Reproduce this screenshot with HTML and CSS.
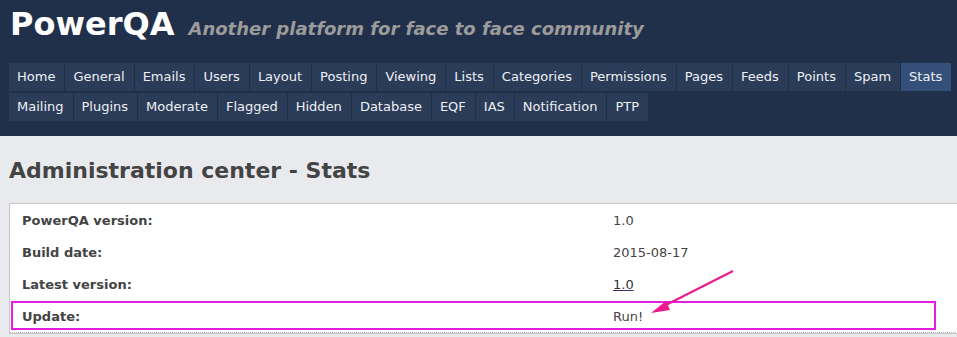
FILE: index.html
```html
<!DOCTYPE html>
<html lang="en">
<head>
    <meta charset="UTF-8">
    <title>Administration center - Stats</title>
    <link rel="stylesheet" href="styles.css">
</head>
<body>
    <!-- Cabeçalho -->
    <div class="header">
        <div class="logo-line">
            <span class="logo">PowerQA</span>
            <span class="tagline">Another platform for face to face community</span>
        </div>
        <ul class="nav">
            <li><a href="#">Home</a></li>
            <li><a href="#">General</a></li>
            <li><a href="#">Emails</a></li>
            <li><a href="#">Users</a></li>
            <li><a href="#">Layout</a></li>
            <li><a href="#">Posting</a></li>
            <li><a href="#">Viewing</a></li>
            <li><a href="#">Lists</a></li>
            <li><a href="#">Categories</a></li>
            <li><a href="#">Permissions</a></li>
            <li><a href="#">Pages</a></li>
            <li><a href="#">Feeds</a></li>
            <li><a href="#">Points</a></li>
            <li><a href="#">Spam</a></li>
            <li class="selected"><a href="#">Stats</a></li>
            <li class="break"></li>
            <li><a href="#">Mailing</a></li>
            <li><a href="#">Plugins</a></li>
            <li><a href="#">Moderate</a></li>
            <li><a href="#">Flagged</a></li>
            <li><a href="#">Hidden</a></li>
            <li><a href="#">Database</a></li>
            <li><a href="#">EQF</a></li>
            <li><a href="#">IAS</a></li>
            <li><a href="#">Notification</a></li>
            <li><a href="#">PTP</a></li>
        </ul>
    </div>

    <!-- Conteúdo -->
    <div class="main">
        <h1>Administration center - Stats</h1>

        <div class="panel">
            <table class="stats">
                <tr>
                    <td class="label">PowerQA version:</td>
                    <td>1.0</td>
                </tr>
                <tr>
                    <td class="label">Build date:</td>
                    <td>2015-08-17</td>
                </tr>
                <tr>
                    <td class="label">Latest version:</td>
                    <td><a href="#">1.0</a></td>
                </tr>
                <tr class="last">
                    <td class="label">Update:</td>
                    <td>Run!</td>
                </tr>
            </table>
            <div class="highlight"></div>
        </div>
    </div>

    <!-- Seta de anotação -->
    <svg class="arrow" width="957" height="337" viewBox="0 0 957 337">
        <line x1="733" y1="271" x2="662" y2="307" stroke="#ec1a8e" stroke-width="2"/>
        <polygon points="651,313 666,301 670,310" fill="#ec1a8e"/>
    </svg>
</body>
</html>
```

FILE: styles.css
```css
body {
    font-family: "DejaVu Sans", Verdana, sans-serif;
    margin: 0;
    padding: 0;
    background-color: #e9eaee;
    overflow: hidden;
}

.header {
    background-color: #21304a;
    padding: 0 0 15px 9px;
}
.logo-line {
    height: 63px;
    display: flex;
    align-items: baseline;
}
.logo {
    font-size: 32px;
    font-weight: bold;
    color: #fff;
    line-height: 49px;
    margin-left: 1px;
}
.tagline {
    font-size: 18px;
    font-weight: bold;
    font-style: italic;
    color: #9b9b9b;
    margin-left: 14px;
}

.nav {
    list-style: none;
    margin: 0;
    padding: 0;
    display: flex;
    flex-wrap: wrap;
    row-gap: 1px;
}
.nav li {
    background-color: #2b3c59;
    margin-right: 1px;
}
.nav li.break {
    flex-basis: 100%;
    height: 0;
    margin: 0;
}
.nav li.selected {
    background-color: #34507a;
}
.nav a {
    display: block;
    color: #eef0f4;
    text-decoration: none;
    font-size: 13px;
    line-height: 28px;
    padding: 0 9px 0 8px;
}

.main {
    padding: 0 0 0 9px;
}
h1 {
    font-size: 22px;
    color: #444;
    margin: 0;
    padding: 20px 0 17px 0;
    line-height: 30px;
}

.panel {
    position: relative;
    background-color: #fff;
    border: 1px solid #c8c8c8;
    margin-right: -20px;
}
.stats {
    width: 100%;
    border-collapse: collapse;
    font-size: 13px;
    color: #444;
}
.stats td {
    height: 32px;
    padding: 0 12px;
}
.stats td.label {
    font-weight: bold;
    width: 567px;
}
.stats tr.last td {
    border-bottom: 1px dotted #b5b5b5;
}
.stats a {
    color: #333;
    text-decoration-color: #4a2a66;
}

.highlight {
    position: absolute;
    left: 1px;
    top: 97px;
    width: 921px;
    height: 25px;
    border: 2px solid #e31ee0;
}

.arrow {
    position: absolute;
    left: 0;
    top: 0;
    pointer-events: none;
}
```
